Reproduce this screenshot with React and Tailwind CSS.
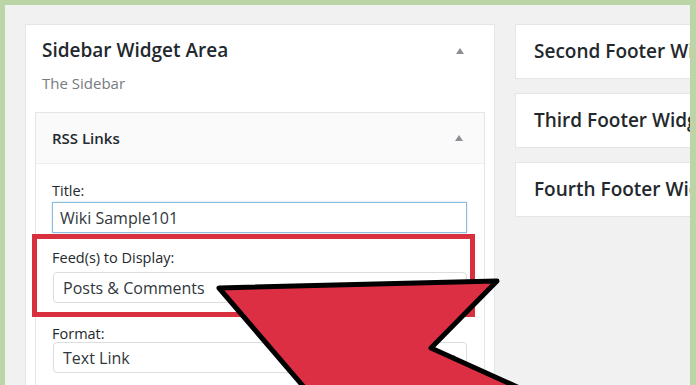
import React from 'react';

const Caret = ({ className = '' }) => (
    <svg width="8" height="6" viewBox="0 0 8 6" className={className}>
        <path d="M0 6 L4 0 L8 6 Z" fill="#8c8f94" />
    </svg>
);

const FooterBox = ({ title }) => (
    <div className="h-[55px] w-[200px] shrink-0 bg-white border border-[#e5e5e5] flex items-center pl-[18px] whitespace-nowrap">
        <span className="text-[19px] font-semibold text-[#23282d]">{title}</span>
    </div>
);

const App = () => {
    return (
        <div className="relative w-[696px] h-[385px] bg-[#bcd5a6] pt-[5px] pl-[5px] pr-[6px] overflow-hidden" style={{ fontFamily: '"Open Sans", "Liberation Sans", sans-serif' }}>
            <div className="h-[380px] bg-[#f1f1f1] overflow-hidden flex gap-[20px] pl-[20px] pt-[19px]">
                {/* Sidebar panel */}
                <div className="w-[470px] shrink-0 bg-white border border-[#e5e5e5] border-b-0 px-[9px] h-[400px]">
                    <div className="flex items-start justify-between pl-[7px] pr-[21px] pt-[13px]">
                        <h2 className="text-[19px] leading-[24px] font-semibold text-[#23282d]">Sidebar Widget Area</h2>
                        <Caret className="mt-[10px]" />
                    </div>
                    <p className="pl-[7px] mt-[11px] text-[15px] leading-[20px] text-[#777b80]">The Sidebar</p>

                    {/* RSS widget */}
                    <div className="mt-[19px] border border-[#e5e5e5] h-[300px]">
                        <div className="h-[51px] bg-[#fafafa] border-b border-[#eeeeee] flex items-center justify-between pl-[16px] pr-[21px]">
                            <span className="text-[15px] font-semibold text-[#23282d]">RSS Links</span>
                            <Caret />
                        </div>
                        <div className="pl-[16px] pr-[17px]">
                            <label className="block mt-[17px] text-[14.5px] leading-[20px] text-[#23282d]">Title:</label>
                            <div className="mt-[1px] h-[31px] border border-[#8ebcdb] flex items-center pl-[7px] text-[16px] text-[#32373c] shadow-[0_0_2px_rgba(30,140,190,0.3)]">
                                Wiki Sample101
                            </div>

                            <div className="relative">
                                <div className="absolute left-[-20px] right-[-8px] top-[1px] h-[83px] border-[5px] border-[#d8303f] pointer-events-none"></div>
                                <label className="block pt-[15px] text-[14.5px] leading-[20px] text-[#23282d]">Feed(s) to Display:</label>
                                <div className="mt-[4px] ml-[1px] h-[31px] border border-[#dddddd] rounded-[4px] flex items-center pl-[9px] text-[16px] text-[#32373c]">
                                    Posts &amp; Comments
                                </div>
                            </div>

                            <label className="block mt-[21px] text-[14.5px] leading-[20px] text-[#23282d]">Format:</label>
                            <div className="mt-[-2px] ml-[1px] h-[31px] border border-[#dddddd] rounded-[4px] flex items-center justify-between pl-[9px] pr-[8px] text-[16px] text-[#32373c]">
                                <span>Text Link</span>
                                <svg width="8" height="6" viewBox="0 0 8 6"><path d="M0 6 L4 0 L8 6 Z" fill="#555" /></svg>
                            </div>
                        </div>
                    </div>
                </div>

                {/* Footer areas */}
                <div className="flex flex-col gap-[14px]">
                    <FooterBox title="Second Footer Widget Area" />
                    <FooterBox title="Third Footer Widget Area" />
                    <FooterBox title="Fourth Footer Widget Area" />
                </div>
            </div>

            {/* Annotation arrow */}
            <svg className="absolute inset-0 pointer-events-none" width="696" height="385" viewBox="0 0 696 385">
                <path
                    d="M219 288 L497 281 L431 348 L546 400 L315 400 Z"
                    fill="#dc2f44"
                    stroke="#000"
                    strokeWidth="5"
                    strokeLinejoin="round"
                />
            </svg>
        </div>
    );
};

export default App;
